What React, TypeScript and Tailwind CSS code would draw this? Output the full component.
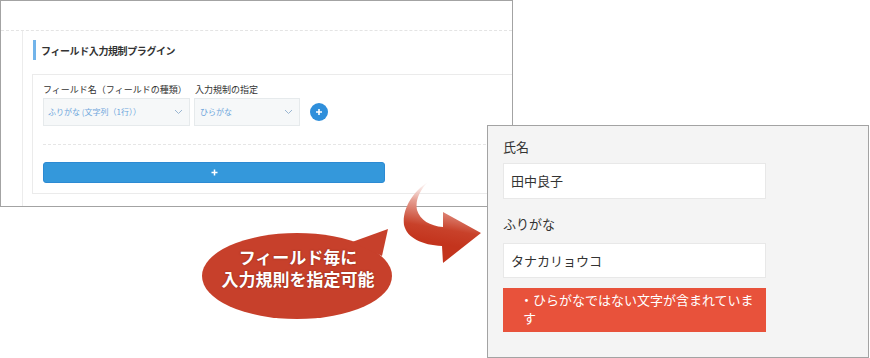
import React from "react";

function Chevron() {
  return (
    <svg width="9" height="6" viewBox="0 0 9 6" fill="none">
      <path d="M1 1 L4.5 4.5 L8 1" stroke="#9ab6d2" strokeWidth="1" />
    </svg>
  );
}

export default function App() {
  return (
    <div className="relative w-[870px] h-[358px] bg-white overflow-hidden font-['Noto_Sans_CJK_JP','Noto_Sans',sans-serif]">
      {/* left window: plugin settings screenshot */}
      <div className="absolute left-0 top-0 w-[513px] h-[207px] border border-[#a3a3a3] bg-white overflow-hidden flex flex-col">
        <div className="h-[30px] shrink-0 border-b border-dashed border-[#e4e4e4]" />
        <div className="flex flex-1">
          <div className="w-[22px] shrink-0 border-r border-[#ececec]" />
          <div className="flex-1 pl-[10px] pt-[9px]">
            <div className="h-[20px] border-l-[3px] border-[#72b4ea] pl-[5px] flex items-center text-[10px] font-bold text-[#333] tracking-[-0.4px]">
              フィールド入力規制プラグイン
            </div>
            <div className="mt-[14px] -ml-[1px] w-[600px] border border-[#ebebeb] pt-[7px] pl-[10px] pb-[10px]">
              <div className="flex h-[16px] items-center text-[9px] text-[#333]">
                <div className="w-[152px]">フィールド名（フィールドの種類）</div>
                <div>入力規制の指定</div>
              </div>
              <div className="flex items-center h-[28px]">
                <div className="w-[147px] h-[28px] bg-[#f6f8f9] border border-[#e6eaec] flex items-center justify-between pl-[4px] pr-[6px] text-[8px] text-[#6ea6dc]">
                  <span>ふりがな (文字列（1行））</span>
                  <Chevron />
                </div>
                <div className="ml-[4px] w-[106px] h-[28px] bg-[#f6f8f9] border border-[#e6eaec] flex items-center justify-between pl-[5px] pr-[6px] text-[8px] text-[#6ea6dc]">
                  <span>ひらがな</span>
                  <Chevron />
                </div>
                <div className="ml-[10px] w-[18px] h-[18px] rounded-full bg-[#2f8fdb] flex items-center justify-center">
                  <svg width="8" height="8" viewBox="0 0 8 8">
                    <path d="M4 1 V7 M1 4 H7" stroke="#fff" strokeWidth="1.6" />
                  </svg>
                </div>
              </div>
              <div className="mt-[18px] border-t border-dashed border-[#e6e6e6]" />
              <div className="mt-[17px] w-[342px] h-[21px] rounded-[3px] bg-[#3498db] border border-[#2c8ad3] flex items-center justify-center">
                <svg width="7" height="7" viewBox="0 0 7 7">
                  <path d="M3.5 0.5 V6.5 M0.5 3.5 H6.5" stroke="#fff" strokeWidth="1.5" />
                </svg>
              </div>
            </div>
          </div>
        </div>
      </div>

      {/* curved arrow */}
      <svg
        className="absolute left-[395px] top-[175px]"
        width="90"
        height="95"
        viewBox="395 175 90 95"
      >
        <defs>
          <linearGradient id="arrowGrad" gradientUnits="userSpaceOnUse" x1="428" y1="181" x2="418" y2="240">
            <stop offset="0" stopColor="#ffffff" stopOpacity="0.6" />
            <stop offset="0.35" stopColor="#e6a195" />
            <stop offset="0.75" stopColor="#c8412a" />
            <stop offset="1" stopColor="#c3341d" />
          </linearGradient>
        </defs>
        <path
          d="M428 182 C 412 192, 402 210, 404 225 C 407 238, 422 245, 442 246 L 443 263 L 481 233 L 443 212 L 443 227 C 430 226, 420 220, 417 210 C 415 200, 420 190, 428 182 Z"
          fill="url(#arrowGrad)"
        />
      </svg>

      {/* speech bubble */}
      <svg
        className="absolute left-[195px] top-[222px]"
        width="205"
        height="102"
        viewBox="195 222 205 102"
      >
        <ellipse cx="297" cy="276" rx="95" ry="43" fill="#c7402b" />
        <polygon points="352,242 388,229 382,256" fill="#c7402b" />
      </svg>
      <div className="absolute left-[203px] top-[246px] w-[190px] flex flex-col items-center text-white font-bold text-[17px] leading-[22px] [text-shadow:0_0_2px_rgba(90,20,10,0.6)]">
        <span className="block">フィールド毎に</span>
        <span className="block">入力規則を指定可能</span>
      </div>

      {/* right panel: form preview */}
      <div className="absolute left-[487px] top-[125px] w-[382px] h-[233px] bg-[#f4f4f4] border border-[#a3a3a3] pl-[15px] pt-[12px]">
        <div className="w-[263px] flex flex-col text-[13px] text-[#333]">
          <div className="leading-[18px]">氏名</div>
          <div className="mt-[7px] h-[36px] bg-white border border-[#e8e8e8] flex items-center pl-[7px]">
            田中良子
          </div>
          <div className="mt-[16px] leading-[18px]">ふりがな</div>
          <div className="mt-[10px] h-[35px] bg-white border border-[#e8e8e8] flex items-center pl-[7px]">
            タナカリョウコ
          </div>
          <div className="mt-[10px] bg-[#e8523b] text-white leading-[18px] pt-[3px] pb-[5px] pl-[20px] pr-[6px] -indent-[3px]">
            ・ひらがなではない文字が含まれています
          </div>
        </div>
      </div>
    </div>
  );
}
